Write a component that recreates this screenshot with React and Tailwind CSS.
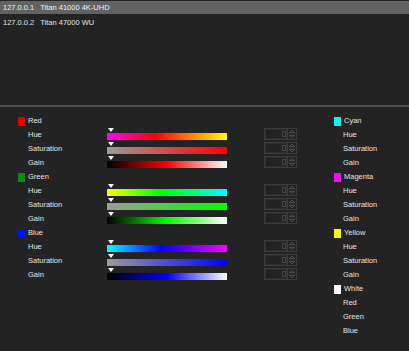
import React from "react";

const leftGroups = [
  {
    name: "Red",
    swatch: "bg-[#e80000]",
    bars: [
      ["Hue", "bg-[linear-gradient(to_right,#ff00ff,#ff0000_40%,#ff8000_70%,#ffff00)]"],
      ["Saturation", "bg-[linear-gradient(to_right,#9a9a9a,#ff0000)]"],
      ["Gain", "bg-[linear-gradient(to_right,#000000,#ff0000_50%,#ffffff)]"],
    ],
  },
  {
    name: "Green",
    swatch: "bg-[#108a10]",
    bars: [
      ["Hue", "bg-[linear-gradient(to_right,#ffff00,#00ff00_45%,#00ffff)]"],
      ["Saturation", "bg-[linear-gradient(to_right,#9a9a9a,#00ff00)]"],
      ["Gain", "bg-[linear-gradient(to_right,#000000,#00ff00_50%,#ffffff)]"],
    ],
  },
  {
    name: "Blue",
    swatch: "bg-[#0010ff]",
    bars: [
      ["Hue", "bg-[linear-gradient(to_right,#00ffff,#0000ff_45%,#ff00ff)]"],
      ["Saturation", "bg-[linear-gradient(to_right,#9a9a9a,#0000ff)]"],
      ["Gain", "bg-[linear-gradient(to_right,#000000,#0000ff_50%,#ffffff)]"],
    ],
  },
];

const rightGroups = [
  { name: "Cyan", swatch: "bg-[#10f0f0]", items: ["Hue", "Saturation", "Gain"] },
  { name: "Magenta", swatch: "bg-[#f010f0]", items: ["Hue", "Saturation", "Gain"] },
  { name: "Yellow", swatch: "bg-[#f8f800]", items: ["Hue", "Saturation", "Gain"] },
  { name: "White", swatch: "bg-[#ffffff]", items: ["Red", "Green", "Blue"] },
];

function SpinBox() {
  return (
    <svg width="33" height="12" viewBox="0 0 33 12" className="block">
      <rect x="0.5" y="0.5" width="32" height="11" fill="none" stroke="#3a3a3a" />
      <rect x="1.5" y="1.5" width="21" height="9" fill="none" stroke="#303030" />
      <rect x="18.5" y="3.5" width="3" height="5" fill="none" stroke="#444" />
      <line x1="23.5" y1="1" x2="23.5" y2="11" stroke="#3a3a3a" />
      <line x1="24" y1="6" x2="32" y2="6" stroke="#333" />
      <path d="M25.5 4.5 L28 2 L30.5 4.5 Z" fill="none" stroke="#555" strokeWidth="0.8" />
      <path d="M25.5 7.5 L28 10 L30.5 7.5 Z" fill="none" stroke="#555" strokeWidth="0.8" />
    </svg>
  );
}

function Header({ name, swatch }) {
  return (
    <div className="flex h-[14px] items-center">
      <div className={`h-[9px] w-[7px] ${swatch}`} />
      <span className="ml-[3px]">{name}</span>
    </div>
  );
}

export default function App() {
  return (
    <div
      className="h-[351px] w-[409px] overflow-hidden bg-[#232323] text-[7.5px] leading-none text-[#e4e4e4]"
      style={{ fontFamily: '"Liberation Sans", Arial, sans-serif' }}
    >
      <div className="h-[105px] pt-[1px]">
        <div className="flex h-[13px] items-center bg-[#626262] pl-[3px] text-[#f2f2f2]">
          <span>127.0.0.1</span>
          <span className="ml-[6px]">Titan 41000 4K-UHD</span>
        </div>
        <div className="flex h-[16px] items-center pl-[3px] pt-[2px]">
          <span>127.0.0.2</span>
          <span className="ml-[6px]">Titan 47000 WU</span>
        </div>
      </div>
      <div className="h-[2px] bg-[#4a4a4a]" />
      <div className="flex pl-[18px] pt-[7px]">
        <div className="w-[316px]">
          {leftGroups.map((g) => (
            <div key={g.name}>
              <Header name={g.name} swatch={g.swatch} />
              {g.bars.map(([label, grad]) => (
                <div key={label} className="flex h-[14px]">
                  <div className="flex w-[89px] items-center pl-[10px]">{label}</div>
                  <div className="flex w-[120px] flex-col">
                    <div className="ml-[1px] h-0 w-0 border-l-[3px] border-r-[3px] border-t-[4px] border-l-transparent border-r-transparent border-t-white" />
                    <div className={`mt-[1px] h-[7px] w-[120px] ${grad}`} />
                  </div>
                  <div className="ml-[37px]">
                    <SpinBox />
                  </div>
                </div>
              ))}
            </div>
          ))}
        </div>
        <div>
          {rightGroups.map((g) => (
            <div key={g.name}>
              <Header name={g.name} swatch={g.swatch} />
              {g.items.map((label) => (
                <div key={label} className="flex h-[14px] items-center pl-[9px]">
                  {label}
                </div>
              ))}
            </div>
          ))}
        </div>
      </div>
    </div>
  );
}
